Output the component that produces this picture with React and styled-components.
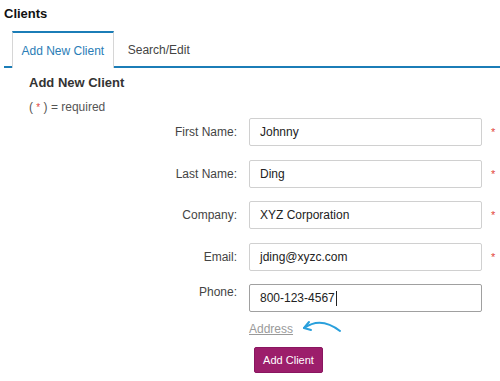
import React from "react";
import styled, { createGlobalStyle } from "styled-components";

const Global = createGlobalStyle`
  html, body { margin: 0; padding: 0; background: #fff; }
  body { font-family: "Liberation Sans", Arial, sans-serif; }
  * { box-sizing: border-box; }
`;

const Page = styled.div`
  width: 500px;
  height: 381px;
  overflow: hidden;
  padding-top: 6px;
`;

const Title = styled.h1`
  margin: 0 0 0 4px;
  font-size: 13px;
  line-height: 16px;
  font-weight: bold;
  color: #111;
`;

const TabBar = styled.div`
  display: flex;
  margin: 9px 0 0 4px;
  padding-left: 8px;
  border-bottom: 2px solid #1b7db7;
`;

const Tab = styled.div`
  height: ${(p) => (p.$active ? "37px" : "35px")};
  margin-bottom: ${(p) => (p.$active ? "-2px" : "0")};
  display: flex;
  align-items: center;
  justify-content: center;
  white-space: nowrap;
  padding: 0 ${(p) => (p.$active ? "8.5px" : "13px")};
  font-size: 12px;
  color: ${(p) => (p.$active ? "#2a7db6" : "#444")};
  background: #fff;
  border-top: 2px solid ${(p) => (p.$active ? "#1b7db7" : "transparent")};
  border-left: 1px solid ${(p) => (p.$active ? "#d6d6d6" : "transparent")};
  border-right: 1px solid ${(p) => (p.$active ? "#d6d6d6" : "transparent")};
`;

const Content = styled.div`
  padding: 7px 0 0 29px;
`;

const Heading = styled.h2`
  margin: 0;
  font-size: 13px;
  line-height: 16px;
  font-weight: bold;
  color: #333;
`;

const Note = styled.div`
  margin-top: 9px;
  font-size: 12px;
  line-height: 14px;
  color: #555;
`;

const Star = styled.span`
  color: #e2453c;
  font-size: 10px;
`;

const Form = styled.div`
  display: flex;
  flex-direction: column;
  gap: 13.5px;
  margin-top: 3px;
`;

const Row = styled.div`
  display: flex;
  align-items: ${(p) => (p.$top ? "flex-start" : "center")};
`;

const Label = styled.label`
  width: 208px;
  text-align: right;
  font-size: 12px;
  line-height: 14px;
  color: #444;
  margin-right: 12px;
  padding-top: ${(p) => (p.$top ? "1px" : "0")};
`;

const Field = styled.div`
  width: 233px;
  height: 28px;
  border: 1px solid ${(p) => (p.$focus ? "#a0a0a0" : "#d0d0d0")};
  border-radius: 2px;
  display: flex;
  align-items: center;
  padding-left: 10px;
  font-size: 12px;
  color: #222;
  background: #fff;
`;

const Caret = styled.span`
  display: inline-block;
  width: 1px;
  height: 15px;
  background: #222;
  margin-left: 1px;
`;

const Req = styled.span`
  margin-left: 9px;
  color: #e2453c;
  font-size: 11px;
  width: 8px;
`;

const LinkRow = styled.div`
  display: flex;
  align-items: center;
  margin: 8px 0 0 220px;
  height: 18px;
`;

const AddressLink = styled.a`
  font-size: 12px;
  color: #9a9a9a;
  text-decoration: underline;
  cursor: pointer;
`;

const Arrow = styled.svg`
  margin-left: 8px;
  margin-top: -6px;
`;

const Submit = styled.button`
  margin: 9px 0 0 225px;
  width: 69px;
  height: 26px;
  border: 1px solid #8a1660;
  border-radius: 2px;
  background: #9c1e6b;
  color: #fff;
  font-family: "Liberation Sans", Arial, sans-serif;
  font-size: 11px;
  padding: 0;
`;

const fields = [
  { label: "First Name:", value: "Johnny", req: true },
  { label: "Last Name:", value: "Ding", req: true },
  { label: "Company:", value: "XYZ Corporation", req: true },
  { label: "Email:", value: "jding@xyzc.com", req: true },
  { label: "Phone:", value: "800-123-4567", focus: true },
];

export default function App() {
  return (
    <Page>
      <Global />
      <Title>Clients</Title>
      <TabBar>
        <Tab $active>Add New Client</Tab>
        <Tab>Search/Edit</Tab>
      </TabBar>
      <Content>
        <Heading>Add New Client</Heading>
        <Note>
          ( <Star>*</Star> ) = required
        </Note>
        <Form>
          {fields.map((f) => (
            <Row key={f.label} $top={f.focus}>
              <Label $top={f.focus}>{f.label}</Label>
              <Field $focus={f.focus}>
                {f.value}
                {f.focus && <Caret />}
              </Field>
              {f.req && <Req>*</Req>}
            </Row>
          ))}
        </Form>
        <LinkRow>
          <AddressLink>Address</AddressLink>
          <Arrow width="42" height="18" viewBox="0 0 42 18" fill="none">
            <path
              d="M3 11 Q 20 -1 39 14"
              stroke="#2aa0dc"
              strokeWidth="2"
              strokeLinecap="round"
            />
            <path
              d="M8 5 L3 11 L10 13"
              stroke="#2aa0dc"
              strokeWidth="2"
              strokeLinecap="round"
              strokeLinejoin="round"
            />
          </Arrow>
        </LinkRow>
        <Submit>Add Client</Submit>
      </Content>
    </Page>
  );
}
